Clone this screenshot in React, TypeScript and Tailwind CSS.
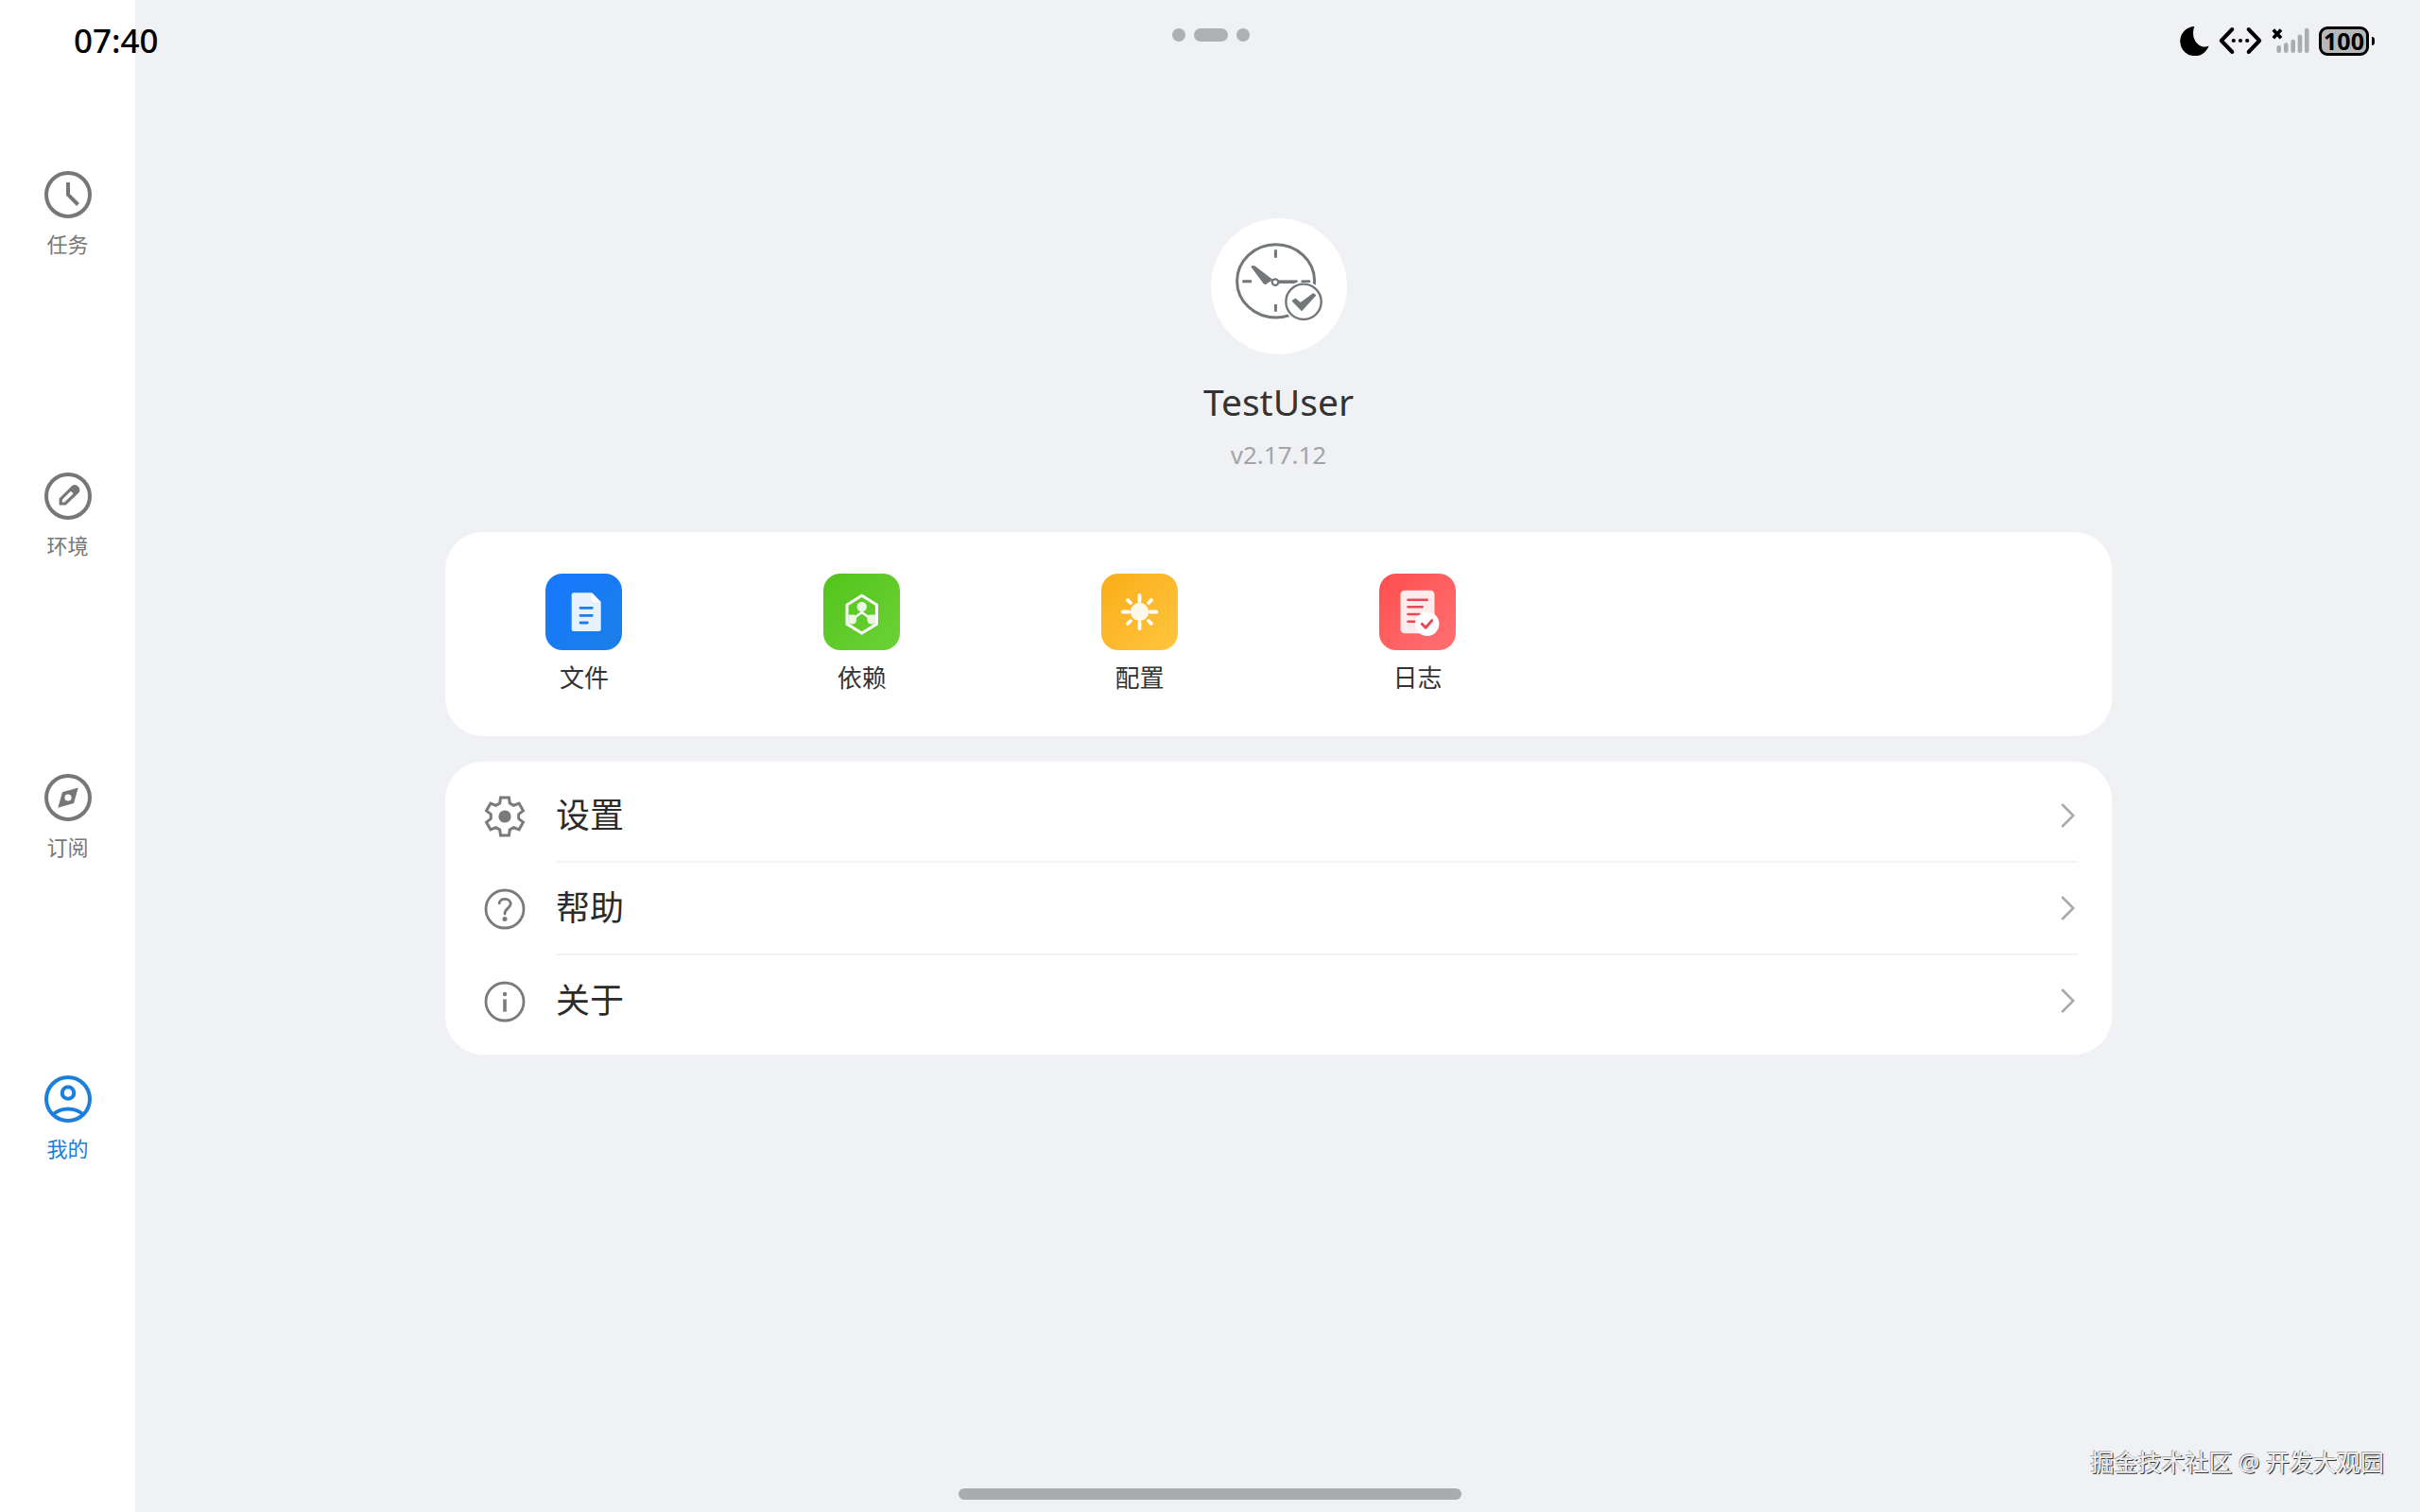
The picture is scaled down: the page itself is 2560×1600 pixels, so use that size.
import type { ReactNode } from "react";

type Item = { label: string; icon: ReactNode };

const ClockIcon = () => (
  <svg viewBox="0 0 52 52" className="size-13" fill="none" stroke="currentColor" strokeWidth="4">
    <circle cx="26" cy="26" r="23" />
    <path d="M26 13V26L36.5 36.5" />
  </svg>
);

const PencilIcon = () => (
  <svg viewBox="0 0 52 52" className="size-13" fill="none" stroke="currentColor">
    <circle cx="26" cy="26" r="23" strokeWidth="4" />
    <path d="M18.2 34V29.2L31 16.4a3.6 3.6 0 0 1 5 5L23 34Z" strokeWidth="3.2" />
    <path d="M27.5 18.5L31 15.5a4.6 4.6 0 0 1 6 6L33.5 25Z" fill="currentColor" />
  </svg>
);

const CompassIcon = () => (
  <svg viewBox="0 0 52 52" className="size-13" fill="none">
    <circle cx="26" cy="26" r="23" stroke="currentColor" strokeWidth="4" />
    <path
      fill="currentColor"
      fillRule="evenodd"
      d="M36.8 15.4L32 32L15.3 36.8L20 20.2ZM26 22.4a3.6 3.6 0 1 0 0 7.2a3.6 3.6 0 1 0 0-7.2Z"
    />
  </svg>
);

const UserIcon = () => (
  <svg viewBox="0 0 52 52" className="size-13" fill="none" stroke="currentColor" strokeWidth="4">
    <circle cx="26" cy="26" r="23" />
    <circle cx="26" cy="19.5" r="6.3" />
    <path d="M10 42.5C18.5 34.5 33.5 34.5 42 42.5" />
  </svg>
);

const navItems: Item[] = [
  { label: "任务", icon: <ClockIcon /> },
  { label: "环境", icon: <PencilIcon /> },
  { label: "订阅", icon: <CompassIcon /> },
  { label: "我的", icon: <UserIcon /> },
];

const FileTile = () => (
  <svg viewBox="0 0 81 81" className="size-full">
    <path
      d="M29.7 20.3H49L58.7 30V59a2 2 0 0 1-2 2H29.7a2 2 0 0 1-2-2V22.3a2 2 0 0 1 2-2Z"
      fill="#e8f2fe"
    />
    <path d="M49 20.3V28a2 2 0 0 0 2 2H58.7Z" fill="#ffffff" />
    <path
      d="M37 36.3H49.3M37 44.3H49.3M37 52H44.3"
      stroke="#1a7cf2"
      strokeWidth="2.8"
      strokeLinecap="round"
    />
  </svg>
);

const DependencyTile = () => (
  <svg viewBox="0 0 81 81" className="size-full" fill="none" stroke="#ffffff">
    <path d="M40.7 23.2L56.4 33V53.4L40.7 63L25 53.4V33Z" strokeWidth="3" />
    <path d="M31 48L40.7 41L50.5 48M40.7 36V41" strokeWidth="2.6" />
    <g fill="#e9f9e1" stroke="none">
      <circle cx="40.7" cy="35" r="5.2" />
      <path d="M26.4 43.6H32a3 3 0 0 1 3 3V49a4.6 4.6 0 0 1-4.6 4.6H29L26.4 52Z" />
      <path d="M55 43.6H49.4a3 3 0 0 0-3 3V49a4.6 4.6 0 0 0 4.6 4.6H52.4L55 52Z" />
    </g>
  </svg>
);

const ConfigTile = () => (
  <svg viewBox="0 0 81 81" className="size-full">
    <circle cx="40.5" cy="40.5" r="9.7" fill="#fff9ec" />
    <path
      d="M40.5 22.8V29M40.5 52V58.2M22.8 40.5H29M52 40.5H58.2M28 28L31 31M50 50L53 53M53 28L50 31M31 50L28 53"
      stroke="#ffffff"
      strokeWidth="3.8"
      strokeLinecap="round"
    />
  </svg>
);

const LogTile = () => (
  <svg viewBox="0 0 81 81" className="size-full" fill="none" strokeLinecap="round">
    <rect x="22.5" y="17.7" width="36" height="45.6" rx="4.5" fill="#ffebec" />
    <path
      d="M30.5 27.7H50.7M30.5 35.3H45.7M30.5 43H43M30.5 50.7H38"
      stroke="#ec4656"
      strokeWidth="2.6"
    />
    <circle cx="50.7" cy="53.3" r="12.7" fill="#ffffff" />
    <path d="M45.3 53.3L49.2 57.2L55.7 49.6" stroke="#ec4656" strokeWidth="3" strokeLinejoin="round" />
  </svg>
);

const tiles: (Item & { bg: string })[] = [
  { label: "文件", icon: <FileTile />, bg: "from-[#1677ff] to-[#1c7fe6]" },
  { label: "依赖", icon: <DependencyTile />, bg: "from-[#52c41a] to-[#6bd236]" },
  { label: "配置", icon: <ConfigTile />, bg: "from-[#faad14] to-[#ffc53d]" },
  { label: "日志", icon: <LogTile />, bg: "from-[#ff4d4f] to-[#ff7072]" },
];

const gearPoints = Array.from({ length: 6 }, (_, i) =>
  [
    [-21, 14.9],
    [-12.5, 20.4],
    [12.5, 20.4],
    [21, 14.9],
  ].map(([deg, r]) => {
    const a = ((i * 60 + deg) * Math.PI) / 180;
    return `${(22 + r * Math.sin(a)).toFixed(2)},${(22 - r * Math.cos(a)).toFixed(2)}`;
  }),
)
  .flat()
  .join(" ");

const GearIcon = () => (
  <svg viewBox="0 0 44 44" className="size-11 overflow-visible">
    <polygon points={gearPoints} fill="none" stroke="currentColor" strokeWidth="3" />
    <circle cx="22" cy="22" r="6.6" fill="currentColor" />
  </svg>
);

const HelpIcon = () => (
  <svg viewBox="0 0 44 44" className="size-11" fill="none" stroke="currentColor" strokeWidth="2.8">
    <circle cx="22" cy="22" r="20" />
    <path d="M16.2 15.9C16.6 9.8 28.2 9.8 28.2 16.6C28.2 20.6 22 21.4 22 27" strokeLinecap="round" />
    <circle cx="22" cy="32.4" r="2.5" fill="currentColor" stroke="none" />
  </svg>
);

const InfoIcon = () => (
  <svg viewBox="0 0 44 44" className="size-11" fill="none" stroke="currentColor">
    <circle cx="22" cy="22" r="20" strokeWidth="2.8" />
    <path d="M22 19.4V32.6" strokeWidth="3.6" />
    <circle cx="22" cy="14" r="2.2" fill="currentColor" stroke="none" />
  </svg>
);

const rows: Item[] = [
  { label: "设置", icon: <GearIcon /> },
  { label: "帮助", icon: <HelpIcon /> },
  { label: "关于", icon: <InfoIcon /> },
];

const AvatarIcon = () => (
  <svg viewBox="0 0 144 144" className="size-36" fill="none" stroke="#72777a">
    <ellipse cx="68.6" cy="66.4" rx="41" ry="38.6" strokeWidth="3" />
    <path d="M68.4 33.3V41.7M68.4 91V98.8M33.3 66.7H43" strokeWidth="3" />
    <path d="M71 67.2H91.6" strokeWidth="3.6" />
    <path
      d="M42.3 51.2Q43.6 49.2 46.6 50.4L65.5 65L57.6 70.2Q55 69.6 54 67Z"
      fill="#72777a"
      stroke="none"
    />
    <circle cx="68" cy="67.6" r="3.3" fill="#ffffff" strokeWidth="2.2" />
    <circle cx="98" cy="88.3" r="21.6" fill="#ffffff" stroke="none" />
    <path d="M95.5 66.7H105" strokeWidth="2.6" />
    <circle cx="98" cy="88.3" r="18.7" strokeWidth="2.4" />
    <path
      d="M86.5 87.5L89.5 85.5L94.8 90L108.5 80L110.3 81.5L96 97.2Z"
      fill="#72777a"
      strokeWidth="1.6"
      strokeLinejoin="round"
    />
  </svg>
);

function StatusBar() {
  return (
    <header className="absolute inset-x-0 top-0 flex h-[86px] items-center justify-between pr-12 pl-[78px] text-black">
      <time className="text-[35px] leading-10 font-medium">07:40</time>
      <div className="flex items-center gap-[9px]">
        <svg viewBox="0 0 32 32" className="size-8">
          <path d="M15.3 1A15.6 15.6 0 1 0 30.6 21.6C23 25.6 10 17 15.3 1Z" fill="#000000" />
        </svg>
        <svg viewBox="0 0 46 30" className="h-[30px] w-[46px]" fill="none">
          <path
            d="M14.3 3L2.8 15L14.3 27M31.7 3L43.2 15L31.7 27"
            stroke="#000000"
            strokeWidth="4"
            strokeLinecap="round"
            strokeLinejoin="round"
          />
          <circle cx="15.8" cy="15" r="2.1" fill="#000000" />
          <circle cx="23" cy="15" r="2.1" fill="#000000" />
          <circle cx="30.2" cy="15" r="2.1" fill="#000000" />
        </svg>
        <svg viewBox="0 0 42 30" className="h-[30px] w-[42px]" fill="none">
          <path d="M2.8 3.4L11 12.2M11 3.4L2.8 12.2" stroke="#000000" strokeWidth="3.6" />
          <path
            d="M8.7 22.3V25.7M16.3 19.6V25.7M23.7 16V25.7M31 10.8V25.7M38.3 4V25.7"
            stroke="#abacae"
            strokeWidth="4.6"
            strokeLinecap="round"
          />
        </svg>
        <div className="flex items-center gap-[3px]">
          <div className="flex h-[31px] w-[53px] items-center justify-center rounded-[9px] border-3 border-black bg-[#b7b8ba] text-[25px] leading-6 font-bold">
            100
          </div>
          <div className="h-[9px] w-[3px] rounded-r-sm bg-black" />
        </div>
      </div>
    </header>
  );
}

export default function App() {
  return (
    <div className="relative flex min-h-screen bg-[#f0f1f5] font-['Noto_Sans','Noto_Sans_CJK_SC',sans-serif]">
      <nav className="w-[143px] shrink-0 bg-white pt-[67px]">
        {navItems.map((item, i) => (
          <a
            key={item.label}
            href="#"
            aria-current={i === 3 ? "page" : undefined}
            className={`flex h-[319px] flex-col items-center justify-center gap-[10px] ${
              i === 3 ? "text-[#1b80dc]" : "text-[#777777]"
            }`}
          >
            {item.icon}
            <span className="text-[22px] leading-8">{item.label}</span>
          </a>
        ))}
      </nav>

      <main className="flex min-w-0 flex-1 flex-col items-center pt-[231px] pl-0.5">
        <div className="rounded-full bg-white">
          <AvatarIcon />
        </div>
        <h1 className="mt-[22px] text-[39px] leading-14 text-[#333333]">TestUser</h1>
        <p className="mt-[10px] text-[26px] leading-9 text-[#a3a4a6]">v2.17.12</p>

        <section className="mt-16 grid w-[73%] grid-cols-6 rounded-[40px] bg-white py-11">
          {tiles.map((tile) => (
            <button key={tile.label} type="button" className="flex flex-col items-center gap-[11px]">
              <span className={`size-[81px] rounded-[18px] bg-linear-to-br ${tile.bg}`}>{tile.icon}</span>
              <span className="text-[26px] leading-9 text-[#333333]">{tile.label}</span>
            </button>
          ))}
        </section>

        <section className="mt-[27px] w-[73%] rounded-[40px] bg-white pt-[9px] pb-[7px]">
          {rows.map((row, i) => (
            <button
              key={row.label}
              type="button"
              className="flex h-[98px] w-full items-stretch gap-8 pr-9 pl-[41px] text-left text-[#7a7a7a]"
            >
              <span className="flex items-center">{row.icon}</span>
              <span
                className={`flex flex-1 items-center justify-between border-b-2 pr-[3px] ${
                  i < rows.length - 1 ? "border-[#f3f3f4]" : "border-transparent"
                }`}
              >
                <span className="text-4xl text-[#2b2b2b]">{row.label}</span>
                <svg viewBox="0 0 15 28" className="h-7 w-[15px]" fill="none">
                  <path d="M1.2 2L13.2 14L1.2 26" stroke="#aaaaaa" strokeWidth="2.6" />
                </svg>
              </span>
            </button>
          ))}
        </section>
      </main>

      <StatusBar />

      <div className="absolute inset-x-0 top-[30px] flex justify-center gap-[9px] pl-0.5">
        <span className="size-[14px] rounded-full bg-[#afb0b3]" />
        <span className="h-[14px] w-9 rounded-full bg-[#afb0b3]" />
        <span className="size-[14px] rounded-full bg-[#afb0b3]" />
      </div>

      <div className="absolute inset-x-0 bottom-[13px] flex justify-center">
        <span className="h-3 w-[532px] rounded-full bg-[#a9abae]" />
      </div>

      <p className="absolute right-[38px] bottom-[35px] text-[25px] leading-9 text-[#f0f0f0] [text-shadow:-1px_-1px_0_#aaaaaa,1px_1px_0_#333333]">
        掘金技术社区 @ 开发大观园
      </p>
    </div>
  );
}
